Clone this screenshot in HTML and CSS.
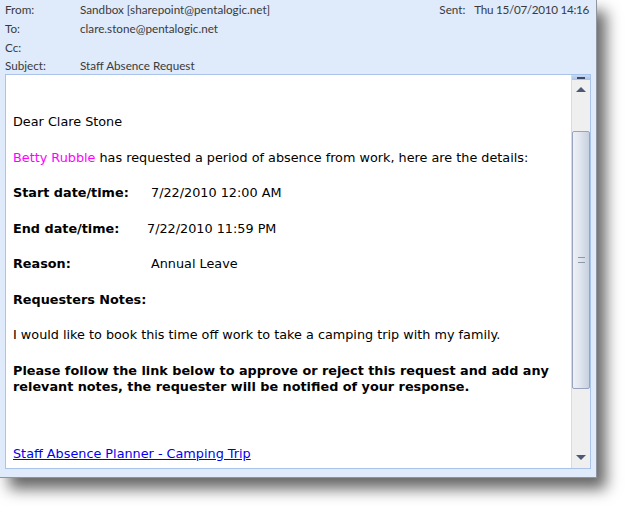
FILE: index.html
```html
<!DOCTYPE html>
<html>
<head>
<meta charset="utf-8">
<link rel="stylesheet" href="styles.css">
</head>
<body>
<div class="page">
<div class="window">
  <div class="header">
    <div class="row"><span class="lbl">From:</span><span class="val">Sandbox [sharepoint@pentalogic.net]</span><span class="sent"><span class="sent-lbl">Sent:</span><span class="sent-val">Thu 15/07/2010 14:16</span></span></div>
    <div class="row"><span class="lbl">To:</span><span class="val">clare.stone@pentalogic.net</span></div>
    <div class="row"><span class="lbl">Cc:</span><span class="val"></span></div>
    <div class="row"><span class="lbl">Subject:</span><span class="val">Staff Absence Request</span></div>
  </div>
  <div class="message">
    <div class="content">
      <p class="greet">Dear Clare Stone</p>
      <p><span class="name">Betty Rubble</span> has requested a period of absence from work, here are the details:</p>
      <p><b class="key k-start">Start date/time:</b>7/22/2010 12:00 AM</p>
      <p><b class="key k-end">End date/time:</b>7/22/2010 11:59 PM</p>
      <p><b class="key k-start">Reason:</b>Annual Leave</p>
      <p><b>Requesters Notes:</b></p>
      <p>I would like to book this time off work to take a camping trip with my family.</p>
      <p class="bold">Please follow the link below to approve or reject this request and add any relevant notes, the requester will be notified of your response.</p>
      <p class="linkp"><a href="#">Staff Absence Planner - Camping Trip</a></p>
    </div>
    <div class="scrollbar">
      <div class="split"><span class="dash"></span></div>
      <div class="btn up"><span class="tri-up"></span></div>
      <div class="track t1"></div>
      <div class="thumb"><span class="grip"></span></div>
      <div class="track t2"></div>
      <div class="btn down"><span class="tri-down"></span></div>
    </div>
  </div>
</div>
</div>
</body>
</html>
```
FILE: styles.css
```css
html, body {
  margin: 0;
  padding: 0;
  background: #ffffff;
}
.page {
  width: 625px;
  height: 506px;
  overflow: hidden;
}
.window {
  width: 596px;
  height: 477px;
  background: #dfeafb;
  border-right: 1px solid #8e959e;
  border-bottom: 1px solid #8e959e;
  box-shadow: 9px 11px 14px rgba(0, 0, 0, 0.6);
  display: flex;
  flex-direction: column;
}
.header {
  height: 74px;
  box-sizing: border-box;
  padding: 0 0 0 5px;
  font-family: Lato, "Noto Sans", sans-serif;
  font-size: 11.7px;
  color: #3a3a3a;
}
.row {
  display: flex;
  height: 18.7px;
  line-height: 16px;
  align-items: center;
}
.lbl {
  width: 75px;
}
.val {
  flex: 1;
}
.sent {
  display: flex;
  margin-right: 7px;
}
.sent-lbl {
  width: 35px;
}
.sent-val {
  letter-spacing: -0.3px;
}
.message {
  margin: 0 5px 0 5px;
  height: 395px;
  box-sizing: border-box;
  border: 1px solid #a9c3ea;
  background: #ffffff;
  display: flex;
}
.content {
  flex: 1;
  overflow: hidden;
  padding: 39px 0 0 7px;
  font-family: "DejaVu Sans", Verdana, sans-serif;
  font-size: 12.8px;
  color: #000000;
}
.content p {
  margin: 0 0 19.5px 0;
  line-height: 16px;
}
.content b, .content .bold {
  font-weight: bold;
}
.key {
  display: inline-block;
  width: 138px;
}
.key.k-end {
  width: 134px;
}
.name {
  color: #ff00ff;
}
.content p.linkp {
  margin-top: 51px;
}
a {
  color: #0000ee;
  text-decoration: underline;
}
.scrollbar {
  width: 18px;
  display: flex;
  flex-direction: column;
  background: #efefef;
  border-left: 1px solid #d6dbe3;
}
.split {
  height: 5px;
  background: linear-gradient(#c9d9f2, #a9c3ea);
  display: flex;
  justify-content: center;
  align-items: center;
}
.dash {
  width: 8px;
  height: 2px;
  background: #3c4a66;
}
.btn {
  height: 19px;
  display: flex;
  justify-content: center;
  align-items: center;
}
.tri-up {
  width: 0;
  height: 0;
  border-left: 5px solid transparent;
  border-right: 5px solid transparent;
  border-bottom: 5px solid #4b5975;
}
.tri-down {
  width: 0;
  height: 0;
  border-left: 5px solid transparent;
  border-right: 5px solid transparent;
  border-top: 5px solid #4b5975;
}
.track.t1 {
  height: 32px;
}
.thumb {
  height: 258px;
  box-sizing: border-box;
  border: 1px solid #98a4bd;
  border-radius: 2px;
  background: linear-gradient(to right, #eef1f6, #e2e7ef 40%, #c6d0df);
  display: flex;
  justify-content: center;
  align-items: center;
}
.grip {
  width: 7px;
  height: 4px;
  border-top: 1px solid #8f98a8;
  border-bottom: 1px solid #8f98a8;
}
.track.t2 {
  flex: 1;
}
.btn.down {
  height: 22px;
}
```
